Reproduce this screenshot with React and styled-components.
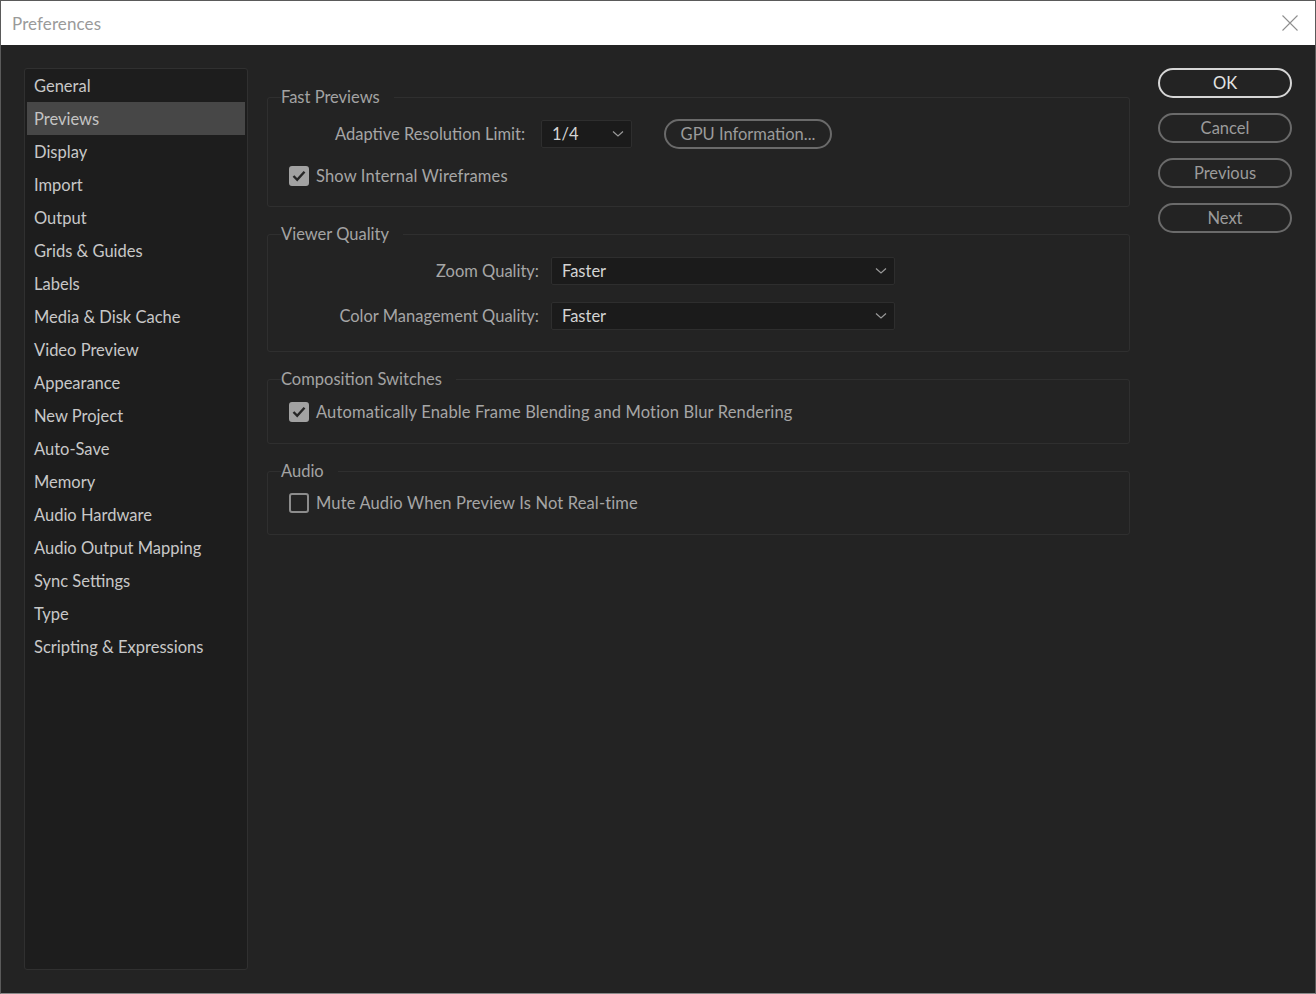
import React from 'react';
import styled, { createGlobalStyle } from 'styled-components';

const Global = createGlobalStyle`
  html, body { margin: 0; padding: 0; background: #232323; }
  body { font-family: Lato, "Noto Sans", sans-serif; }
`;

const Window = styled.div`
  width: 1316px;
  height: 994px;
  box-sizing: border-box;
  border: 1px solid #5a5a5a;
  border-bottom-color: #8a8a8a;
  background: #232323;
  display: flex;
  flex-direction: column;
  overflow: hidden;
`;

const TitleBar = styled.div`
  height: 44px;
  flex: none;
  background: #ffffff;
  display: flex;
  align-items: center;
  justify-content: space-between;
  padding: 0 16px 0 11px;
`;

const Title = styled.span`
  color: #9a9a9a;
  font-size: 17px;
  letter-spacing: 0.1px;
`;

const Close = styled.button`
  border: 0;
  background: none;
  padding: 0;
  width: 18px;
  height: 18px;
  display: flex;
`;

const Body = styled.div`
  flex: 1;
  display: flex;
  padding: 23px 23px 23px 23px;
  min-height: 0;
`;

const Sidebar = styled.ul`
  list-style: none;
  margin: 0;
  padding: 0 2px;
  width: 224px;
  box-sizing: border-box;
  flex: none;
  background: #1d1d1d;
  border: 1px solid #303030;
  border-radius: 3px;
`;

const NavItem = styled.li`
  height: 33px;
  display: flex;
  align-items: center;
  padding-left: 7px;
  font-size: 16.5px;
  color: ${p => (p.$active ? '#c4c4c4' : '#c8c8c8')};
  background: ${p => (p.$active ? '#474747' : 'transparent')};
`;

const Content = styled.div`
  width: 863px;
  flex: none;
  margin-left: 19px;
  padding-top: 19px;
  display: flex;
  flex-direction: column;
  gap: 17px;
`;

const Group = styled.fieldset`
  margin: 0;
  border: 1px solid #2f2f2f;
  border-radius: 3px;
  padding: 0 0 ${p => p.$pb || 16}px 21px;
  min-width: 0;
`;

const Legend = styled.legend`
  color: #a3a3a3;
  font-size: 16.5px;
  padding: 0 14px 0 0;
  margin-left: -8px;
  line-height: 20px;
`;

const Row = styled.div`
  display: flex;
  align-items: center;
  margin-top: ${p => p.$mt || 0}px;
  padding-left: ${p => p.$indent || 0}px;
`;

const Label = styled.span`
  color: #a6a6a6;
  font-size: 16.5px;
  width: ${p => (p.$w ? `${p.$w}px` : 'auto')};
  text-align: right;
  flex: none;
  margin-right: ${p => p.$gap || 12}px;
`;

const Select = styled.div`
  width: ${p => p.$w}px;
  height: 28px;
  box-sizing: border-box;
  background: #1b1b1b;
  border: 1px solid #2e2e2e;
  border-radius: 2px;
  display: flex;
  align-items: center;
  justify-content: space-between;
  padding: 0 7px 0 10px;
  color: #d4d4d4;
  font-size: 16.5px;
`;

const PillButton = styled.button`
  height: ${p => p.$h || 30}px;
  width: ${p => (p.$w ? `${p.$w}px` : 'auto')};
  box-sizing: border-box;
  border-radius: 16px;
  border: 2px solid ${p => (p.$primary ? '#d6d6d6' : '#6a6a6a')};
  background: transparent;
  color: ${p => (p.$primary ? '#e2e2e2' : '#9b9b9b')};
  font-family: inherit;
  font-size: 16.5px;
  padding: 0 14px;
  display: flex;
  align-items: center;
  justify-content: center;
`;

const CheckRow = styled.label`
  display: flex;
  align-items: center;
  gap: 7px;
  color: #a6a6a6;
  font-size: 16.5px;
  letter-spacing: 0.15px;
  margin-top: ${p => p.$mt || 0}px;
  margin-left: 0;
`;

const Box = styled.span`
  width: 20px;
  height: 20px;
  box-sizing: border-box;
  border-radius: 3px;
  flex: none;
  display: flex;
  align-items: center;
  justify-content: center;
  background: ${p => (p.$checked ? '#a2a2a2' : 'transparent')};
  border: 2px solid ${p => (p.$checked ? '#a2a2a2' : '#8c8c8c')};
`;

const Actions = styled.div`
  margin-left: 28px;
  width: 134px;
  display: flex;
  flex-direction: column;
  gap: 15px;
`;

const Chevron = () => (
  <svg width="12" height="8" viewBox="0 0 12 8">
    <path d="M1 1.5 L6 6 L11 1.5" fill="none" stroke="#9a9a9a" strokeWidth="1.2" />
  </svg>
);

const Check = ({ checked }) => (
  <Box $checked={checked}>
    {checked && (
      <svg width="14" height="12" viewBox="0 0 14 12">
        <path d="M1.5 6 L5.2 9.8 L12.5 1.8" fill="none" stroke="#262626" strokeWidth="2.4" />
      </svg>
    )}
  </Box>
);

const nav = [
  'General', 'Previews', 'Display', 'Import', 'Output', 'Grids & Guides', 'Labels',
  'Media & Disk Cache', 'Video Preview', 'Appearance', 'New Project', 'Auto-Save',
  'Memory', 'Audio Hardware', 'Audio Output Mapping', 'Sync Settings', 'Type',
  'Scripting & Expressions',
];

export default function App() {
  return (
    <>
      <Global />
      <Window>
        <TitleBar>
          <Title>Preferences</Title>
          <Close aria-label="Close">
            <svg width="18" height="18" viewBox="0 0 18 18">
              <path d="M1.5 1.5 L16.5 16.5 M16.5 1.5 L1.5 16.5" stroke="#8f8f8f" strokeWidth="1.1" />
            </svg>
          </Close>
        </TitleBar>
        <Body>
          <Sidebar>
            {nav.map(n => (
              <NavItem key={n} $active={n === 'Previews'}>{n}</NavItem>
            ))}
          </Sidebar>
          <Content>
            <Group $pb={20}>
              <Legend>Fast Previews</Legend>
              <Row $mt={12} $indent={46}>
                <Label $gap={16}>Adaptive Resolution Limit:</Label>
                <Select $w={91}>1/4<Chevron /></Select>
                <PillButton $w={168} style={{ marginLeft: 32 }}>GPU Information...</PillButton>
              </Row>
              <CheckRow $mt={17}>
                <Check checked />
                Show Internal Wireframes
              </CheckRow>
            </Group>
            <Group $pb={21}>
              <Legend>Viewer Quality</Legend>
              <Row $mt={13} $indent={46}>
                <Label $w={204}>Zoom Quality:</Label>
                <Select $w={344}>Faster<Chevron /></Select>
              </Row>
              <Row $mt={17} $indent={46}>
                <Label $w={204}>Color Management Quality:</Label>
                <Select $w={344}>Faster<Chevron /></Select>
              </Row>
            </Group>
            <Group $pb={21}>
              <Legend>Composition Switches</Legend>
              <CheckRow $mt={13}>
                <Check checked />
                Automatically Enable Frame Blending and Motion Blur Rendering
              </CheckRow>
            </Group>
            <Group $pb={21}>
              <Legend>Audio</Legend>
              <CheckRow $mt={12}>
                <Check />
                Mute Audio When Preview Is Not Real-time
              </CheckRow>
            </Group>
          </Content>
          <Actions>
            <PillButton $primary>OK</PillButton>
            <PillButton>Cancel</PillButton>
            <PillButton>Previous</PillButton>
            <PillButton>Next</PillButton>
          </Actions>
        </Body>
      </Window>
    </>
  );
}
